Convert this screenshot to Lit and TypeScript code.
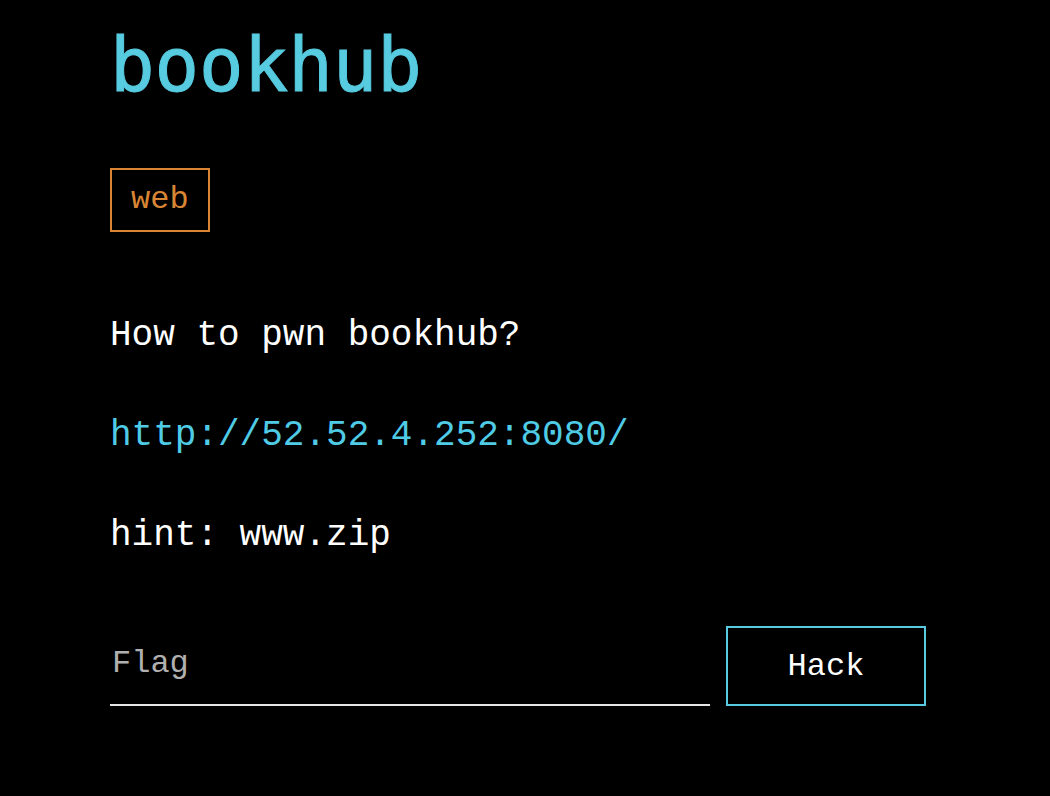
import { LitElement, html, css } from "lit";
import { customElement } from "lit/decorators.js";

@customElement("app-root")
export class AppRoot extends LitElement {
  static styles = css`
    :host {
      display: block;
      box-sizing: border-box;
      min-height: 100vh;
      padding: 25px 124px 90px 110px;
      background: #000;
      color: #fff;
      font-family: "Liberation Mono", "Courier New", monospace;
      font-size: 36px;
      line-height: 40px;
    }
    h1 {
      margin: 0 0 63px;
      color: #57cbe0;
      font-family: "DejaVu Sans Mono", monospace;
      font-size: 74px;
      font-weight: 400;
      line-height: 80px;
      -webkit-text-stroke: 1px #57cbe0;
    }
    .tag {
      display: inline-block;
      padding: 10px 19px;
      border: 2px solid #d98634;
      color: #d98634;
      font-size: 32px;
      line-height: 40px;
    }
    .body {
      padding: 84px 0 70px;
    }
    p {
      margin: 0 0 60px;
    }
    p:last-child {
      margin-bottom: 0;
    }
    a {
      color: #4fcbe6;
      text-decoration: none;
    }
    form {
      display: flex;
      gap: 16px;
    }
    input,
    button {
      box-sizing: border-box;
      height: 80px;
      border-radius: 0;
      background: transparent;
      color: #fff;
      font: inherit;
      font-size: 32px;
      outline: none;
    }
    input {
      flex: 1;
      min-width: 0;
      padding: 0 2px 4px;
      border: 0;
      border-bottom: 2px solid #e6e6e6;
    }
    input::placeholder {
      color: #b0b0b0;
      opacity: 1;
    }
    button {
      width: 200px;
      padding: 2px 0 0;
      border: 2px solid #57cbe0;
    }
  `;

  render() {
    return html`
      <main>
        <h1>bookhub</h1>
        <span class="tag">web</span>
        <div class="body">
          <p>How to pwn bookhub?</p>
          <p><a href="http://52.52.4.252:8080/">http://52.52.4.252:8080/</a></p>
          <p>hint: www.zip</p>
        </div>
        <form @submit=${(e: Event) => e.preventDefault()}>
          <input type="text" name="flag" aria-label="Flag" placeholder="Flag" />
          <button type="submit">Hack</button>
        </form>
      </main>
    `;
  }
}
